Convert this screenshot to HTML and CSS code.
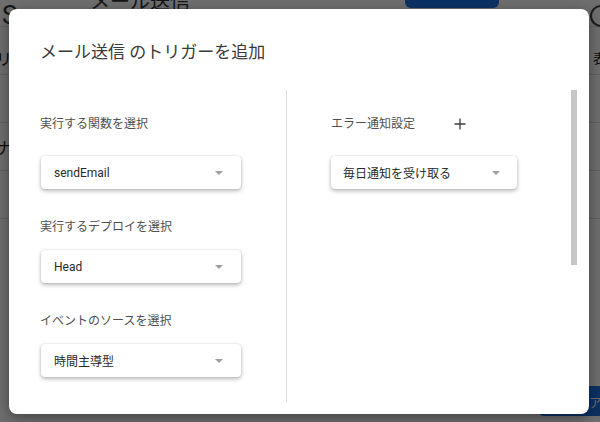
FILE: index.html
```html
<!DOCTYPE html>
<html lang="ja">
<head>
<meta charset="utf-8">
<link rel="stylesheet" href="styles.css">
</head>
<body>
<div class="page">
  <div class="page-head">
    <span class="page-icon">S</span>
    <span class="page-title">メール送信</span>
    <span class="page-btn"></span>
    <span class="page-help"></span>
  </div>
  <div class="page-row first"><span>リ</span><span>表</span></div>
  <div class="page-row"><span></span><span></span></div>
  <div class="page-row"><span>ナ</span><span></span></div>
  <div class="page-row"><span></span><span></span></div>
  <div class="page-foot"><span class="page-btn2">ア</span></div>
</div>
<div class="scrim"></div>
<div class="dialog">
  <h1 class="dialog-title">メール送信 のトリガーを追加</h1>
  <div class="dialog-body">
    <div class="col col-left">
      <div class="field f1">
        <div class="label">実行する関数を選択</div>
        <div class="select"><span>sendEmail</span><i class="caret"></i></div>
      </div>
      <div class="field f2">
        <div class="label">実行するデプロイを選択</div>
        <div class="select"><span>Head</span><i class="caret"></i></div>
      </div>
      <div class="field f3">
        <div class="label">イベントのソースを選択</div>
        <div class="select"><span>時間主導型</span><i class="caret"></i></div>
      </div>
    </div>
    <div class="col col-right">
      <div class="field f1">
        <div class="label-row">
          <span class="label">エラー通知設定</span>
          <svg class="plus" width="14" height="14" viewBox="0 0 14 14"><path d="M7 1.5v11M1.5 7h11" stroke="#3c3c3c" stroke-width="1.3" fill="none"/></svg>
        </div>
        <div class="select wide"><span>毎日通知を受け取る</span><i class="caret"></i></div>
      </div>
    </div>
    <div class="scroll-track"><div class="scroll-thumb"></div></div>
  </div>
</div>
</body>
</html>
```

FILE: styles.css
```css
html, body {
  margin: 0;
  padding: 0;
}
body {
  width: 600px;
  height: 422px;
  overflow: hidden;
  position: relative;
  background: #fff;
  font-family: Roboto, "Noto Sans CJK JP", sans-serif;
}
.page {
  width: 600px;
  height: 422px;
  display: flex;
  flex-direction: column;
}
.page-head {
  height: 40px;
  margin-top: -14px;
  display: flex;
  align-items: flex-start;
  border-bottom: 1px solid #e8e8e8;
}
.page-icon {
  font-size: 26px;
  color: #333;
  width: 88px;
  padding-top: 14px;
  padding-left: 2px;
}
.page-title {
  font-size: 20px;
  color: #333;
  flex: 1;
  padding-top: 0;
}
.page-btn {
  width: 94px;
  height: 36px;
  margin-top: -14px;
  background: #1a73e8;
  border-radius: 6px;
  margin-right: 91px;
}
.page-help {
  width: 18px;
  height: 18px;
  border: 2px solid #444;
  border-radius: 50%;
  margin-top: 19px;
  margin-right: -12px;
}
.page-row {
  height: 47px;
  border-bottom: 1px solid #e0e0e0;
  display: flex;
  justify-content: space-between;
  align-items: center;
  font-size: 16px;
  color: #222;
}
.page-row.first {
  padding-top: 14px;
  height: 33px;
}
.page-row span:first-child { margin-left: -4px; }
.page-row span:last-child { margin-right: -6px; font-size: 13px; }
.page-foot {
  flex: 1;
  display: flex;
  justify-content: flex-end;
  align-items: flex-end;
  padding-bottom: 6px;
}
.page-btn2 {
  width: 66px;
  height: 30px;
  background: #1a73e8;
  border-radius: 6px;
  color: #fff;
  font-size: 13px;
  display: flex;
  align-items: center;
  justify-content: flex-end;
  padding-right: 2px;
  box-sizing: border-box;
  margin-right: -4px;
}
.scrim {
  position: absolute;
  inset: 0;
  background: rgba(0, 0, 0, 0.57);
}
.dialog {
  position: absolute;
  left: 9px;
  top: 9px;
  width: 580px;
  height: 405px;
  background: #fff;
  border-radius: 8px;
  display: flex;
  flex-direction: column;
  box-sizing: border-box;
  padding: 0 0 12px 0;
  box-shadow: 0 4px 14px rgba(0, 0, 0, 0.4);
}
.dialog-title {
  margin: 0;
  padding: 31px 0 0 31px;
  height: 50px;
  box-sizing: border-box;
  font-size: 17px;
  line-height: 24px;
  font-weight: 400;
  color: #3a3a3a;
  flex: none;
}
.dialog-body {
  flex: 1;
  display: flex;
  margin-top: 31px;
  min-height: 0;
}
.col-left {
  width: 246px;
  padding-left: 31px;
  border-right: 1px solid #dcdcdc;
  box-sizing: content-box;
}
.col-right {
  flex: 1;
  padding-left: 44px;
}
.field {
  display: flex;
  flex-direction: column;
}
.f1 { padding-top: 25px; }
.f1 .select { margin-top: 23px; }
.f2 { padding-top: 29px; }
.f2 .select { margin-top: 14px; }
.f3 { padding-top: 29px; }
.f3 .select { margin-top: 14px; }
.label {
  font-size: 12px;
  line-height: 18px;
  color: #505050;
}
.label-row {
  display: flex;
  align-items: center;
  height: 18px;
}
.plus {
  margin-left: 38px;
}
.select {
  width: 200px;
  height: 33px;
  margin-left: 1px;
  box-sizing: border-box;
  border-radius: 4px;
  background: #fff;
  box-shadow: 0 2px 4px rgba(0, 0, 0, 0.28), 0 0 2px rgba(0, 0, 0, 0.14);
  display: flex;
  align-items: center;
  justify-content: space-between;
  padding: 0 18px 0 13px;
  font-size: 12px;
  color: #2a2a2a;
}
.select.wide {
  width: 186px;
  margin-left: 0;
  padding-left: 12px;
  padding-right: 17px;
}
.caret {
  width: 0;
  height: 0;
  border-left: 4px solid transparent;
  border-right: 4px solid transparent;
  border-top: 4px solid #9e9e9e;
}
.scroll-track {
  width: 8px;
  margin-right: 12px;
  display: flex;
  flex-direction: column;
}
.scroll-thumb {
  height: 175px;
  background: #c6c6c6;
  margin-left: 2px;
  width: 6px;
}
```
